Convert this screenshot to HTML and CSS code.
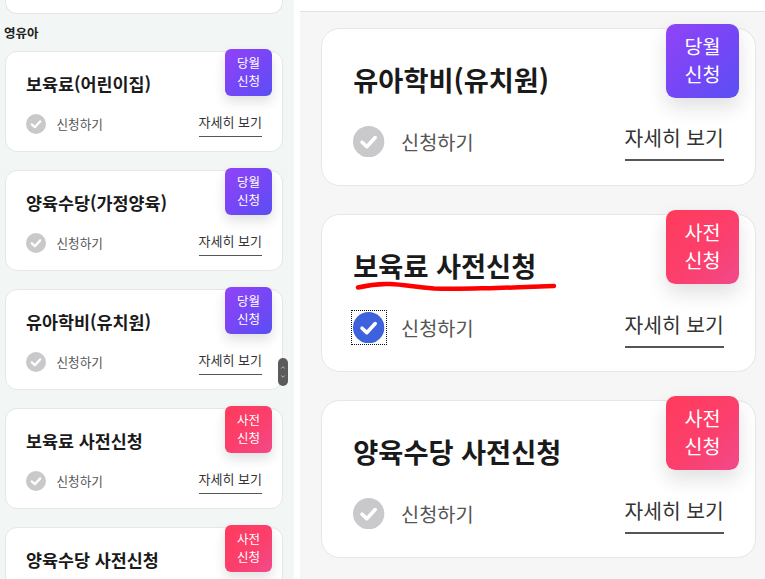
FILE: index.html
```html
<!DOCTYPE html>
<html lang="ko">
<head>
<meta charset="utf-8">
<link rel="stylesheet" href="styles.css">
</head>
<body>
<div class="page">
  <section class="panel panel-left">
    <div class="card-tail"></div>
    <h2 class="group-label">영유아</h2>
    <div class="card-list">
      <div class="card">
        <div class="card-title">보육료(어린이집)</div>
        <div class="card-row">
          <svg class="check" viewBox="0 0 20 20"><circle cx="10" cy="10" r="10" class="check-bg"/><path d="M5.8 10.4 L8.8 13.2 L14.2 7.4" class="check-mark"/></svg>
          <span class="apply">신청하기</span>
          <span class="detail">자세히 보기</span>
        </div>
        <div class="badge badge-month"><span>당월</span><span>신청</span></div>
      </div>
      <div class="card">
        <div class="card-title">양육수당(가정양육)</div>
        <div class="card-row">
          <svg class="check" viewBox="0 0 20 20"><circle cx="10" cy="10" r="10" class="check-bg"/><path d="M5.8 10.4 L8.8 13.2 L14.2 7.4" class="check-mark"/></svg>
          <span class="apply">신청하기</span>
          <span class="detail">자세히 보기</span>
        </div>
        <div class="badge badge-month"><span>당월</span><span>신청</span></div>
      </div>
      <div class="card">
        <div class="card-title">유아학비(유치원)</div>
        <div class="card-row">
          <svg class="check" viewBox="0 0 20 20"><circle cx="10" cy="10" r="10" class="check-bg"/><path d="M5.8 10.4 L8.8 13.2 L14.2 7.4" class="check-mark"/></svg>
          <span class="apply">신청하기</span>
          <span class="detail">자세히 보기</span>
        </div>
        <div class="badge badge-month"><span>당월</span><span>신청</span></div>
      </div>
      <div class="card">
        <div class="card-title">보육료 사전신청</div>
        <div class="card-row">
          <svg class="check" viewBox="0 0 20 20"><circle cx="10" cy="10" r="10" class="check-bg"/><path d="M5.8 10.4 L8.8 13.2 L14.2 7.4" class="check-mark"/></svg>
          <span class="apply">신청하기</span>
          <span class="detail">자세히 보기</span>
        </div>
        <div class="badge badge-pre"><span>사전</span><span>신청</span></div>
      </div>
      <div class="card">
        <div class="card-title">양육수당 사전신청</div>
        <div class="card-row">
          <svg class="check" viewBox="0 0 20 20"><circle cx="10" cy="10" r="10" class="check-bg"/><path d="M5.8 10.4 L8.8 13.2 L14.2 7.4" class="check-mark"/></svg>
          <span class="apply">신청하기</span>
          <span class="detail">자세히 보기</span>
        </div>
        <div class="badge badge-pre"><span>사전</span><span>신청</span></div>
      </div>
    </div>
    <div class="scroll-thumb">
      <svg viewBox="0 0 10 28"><path d="M3.2 10.5 L5 8.7 L6.8 10.5" class="thumb-arrow"/><path d="M3.2 17.5 L5 19.3 L6.8 17.5" class="thumb-arrow"/></svg>
    </div>
  </section>

  <section class="panel panel-right">
    <div class="topbar"></div>
    <div class="card-list">
      <div class="card">
        <div class="card-title">유아학비(유치원)</div>
        <div class="card-row">
          <svg class="check" viewBox="0 0 20 20"><circle cx="10" cy="10" r="10" class="check-bg"/><path d="M5.8 10.4 L8.8 13.2 L14.2 7.4" class="check-mark"/></svg>
          <span class="apply">신청하기</span>
          <span class="detail">자세히 보기</span>
        </div>
        <div class="badge badge-month"><span>당월</span><span>신청</span></div>
      </div>
      <div class="card">
        <div class="card-title">보육료 사전신청</div>
        <div class="card-row">
          <span class="focus-ring">
            <svg class="check check-on" viewBox="0 0 20 20"><circle cx="10" cy="10" r="10" class="check-bg"/><path d="M5.8 10.4 L8.8 13.2 L14.2 7.4" class="check-mark"/></svg>
          </span>
          <span class="apply">신청하기</span>
          <span class="detail">자세히 보기</span>
        </div>
        <div class="badge badge-pre"><span>사전</span><span>신청</span></div>
        <svg class="scribble" viewBox="0 0 240 12"><path d="M2 7.5 C 10 5.5, 20 3.5, 34 4 C 48 4.5, 58 7, 78 8.5 C 98 9.5, 118 8.5, 140 8 C 160 7.5, 182 6.5, 198 6"/></svg>
      </div>
      <div class="card">
        <div class="card-title">양육수당 사전신청</div>
        <div class="card-row">
          <svg class="check" viewBox="0 0 20 20"><circle cx="10" cy="10" r="10" class="check-bg"/><path d="M5.8 10.4 L8.8 13.2 L14.2 7.4" class="check-mark"/></svg>
          <span class="apply">신청하기</span>
          <span class="detail">자세히 보기</span>
        </div>
        <div class="badge badge-pre"><span>사전</span><span>신청</span></div>
      </div>
    </div>
  </section>
</div>
</body>
</html>
```

FILE: styles.css
```css
* { box-sizing: border-box; }
html, body {
  margin: 0;
  padding: 0;
  background: #ffffff;
}
body {
  width: 765px;
  height: 579px;
  overflow: hidden;
  font-family: "Noto Sans CJK KR", "Noto Sans", sans-serif;
  color: #1b1b1b;
}
.page {
  display: flex;
  gap: 6px;
  height: 579px;
}
.panel {
  position: relative;
  overflow: hidden;
  height: 579px;
}
.panel-left {
  --u: 1px;
  width: 294px;
  background: #f2f6f4;
}
.panel-right {
  --u: 1.565px;
  flex: 1;
  background: #f6f6f6;
}

/* left panel header bits */
.card-tail {
  height: 14px;
  width: 278px;
  margin-left: 5px;
  background: #fff;
  border: 1px solid #e4e6e5;
  border-top: none;
  border-radius: 0 0 12px 12px;
}
.group-label {
  margin: 0;
  padding: 11px 0 10px 4px;
  font-size: 12.5px;
  line-height: 16px;
  font-weight: 700;
  color: #222;
}
.panel-left .card-list {
  display: flex;
  flex-direction: column;
  gap: 18px;
  padding-left: 5px;
  width: 283px;
}

/* right panel */
.topbar {
  height: 12px;
  background: #fff;
  border-bottom: 1px solid #e2e2e2;
}
.panel-right .card-list {
  display: flex;
  flex-direction: column;
  gap: 28px;
  padding: 16px 9px 0 21px;
}

/* card */
.card {
  position: relative;
  flex: none;
  height: calc(var(--u) * 101);
  background: #fff;
  border: 1px solid #e5e6e6;
  border-radius: calc(var(--u) * 12);
  padding: calc(var(--u) * 21) calc(var(--u) * 20) 0 calc(var(--u) * 20);
  display: flex;
  flex-direction: column;
}
.card-title {
  font-size: calc(var(--u) * 17.4);
  line-height: calc(var(--u) * 22);
  font-weight: 700;
  color: #1a1a1a;
}
.card-row {
  margin-top: calc(var(--u) * 17);
  height: calc(var(--u) * 24);
  display: flex;
  align-items: center;
}
.check {
  width: calc(var(--u) * 20);
  height: calc(var(--u) * 20);
  flex: none;
  display: block;
}
.check-bg { fill: #c9c8ca; }
.check-mark {
  fill: none;
  stroke: #fff;
  stroke-width: 2.3;
  stroke-linecap: round;
  stroke-linejoin: round;
}
.check-on .check-bg { fill: #3e62dc; }
.focus-ring {
  display: block;
  flex: none;
  outline: 1px dotted #111;
  outline-offset: 1px;
}
.apply {
  margin-left: calc(var(--u) * 10.5);
  font-size: calc(var(--u) * 12.6);
  line-height: calc(var(--u) * 18);
  color: #555;
}
.detail {
  margin-left: auto;
  font-size: calc(var(--u) * 13);
  line-height: calc(var(--u) * 18);
  color: #333;
  padding-bottom: calc(var(--u) * 5);
  border-bottom: calc(var(--u) * 1.3) solid #555;
  margin-top: calc(var(--u) * 1);
}

/* badge overlay */
.badge {
  position: absolute;
  top: calc(var(--u) * -3);
  right: calc(var(--u) * 10);
  width: calc(var(--u) * 47);
  height: calc(var(--u) * 47);
  border-radius: calc(var(--u) * 6);
  display: flex;
  flex-direction: column;
  align-items: center;
  justify-content: center;
  padding-bottom: calc(var(--u) * 1);
  color: #fff;
  font-size: calc(var(--u) * 12.5);
  line-height: calc(var(--u) * 18);
  box-shadow: 0 calc(var(--u) * 6) calc(var(--u) * 12) rgba(40, 40, 60, 0.14);
}
.badge-month {
  background: linear-gradient(135deg, #9243f7 0%, #7447f6 55%, #5a4ff3 100%);
}
.badge-pre {
  background: linear-gradient(135deg, #ff3b5c 0%, #fb3f6c 55%, #f24a8c 100%);
}

/* scribble annotation */
.scribble {
  position: absolute;
  left: 34px;
  top: 65px;
  width: 240px;
  height: 12px;
  overflow: visible;
}
.scribble path {
  fill: none;
  stroke: #ff0000;
  stroke-width: 4.5;
  stroke-linecap: round;
}

/* scrollbar thumb overlay */
.scroll-thumb {
  position: absolute;
  left: 278px;
  top: 358px;
  width: 10px;
  height: 28px;
  border-radius: 5px;
  background: #5b5b5b;
}
.scroll-thumb svg { display: block; width: 10px; height: 28px; }
.thumb-arrow {
  fill: none;
  stroke: #bdbdbd;
  stroke-width: 1;
}
```
